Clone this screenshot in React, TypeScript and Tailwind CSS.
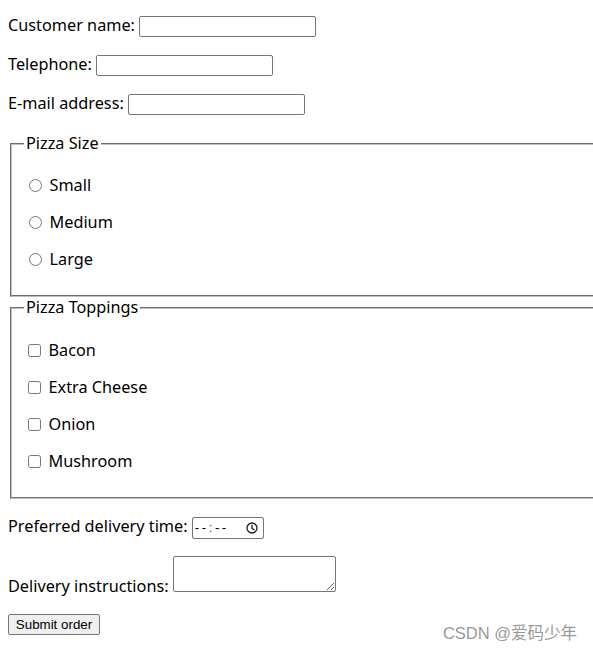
const inputCls =
  "align-baseline rounded-[2px] border border-[#767676] bg-white px-[2px] py-[1px] font-['Liberation_Sans',Arial,sans-serif] text-[13.333px] h-[21px] outline-none";

function ClockIcon() {
  return (
    <svg width="12" height="12" viewBox="0 0 12 12" className="ml-auto mr-[5px]">
      <circle cx="6" cy="6" r="5" fill="none" stroke="#1a1a1a" strokeWidth="1.3" />
      <path d="M6 3.2V6.2L8.1 7.7" fill="none" stroke="#1a1a1a" strokeWidth="1.3" strokeLinecap="round" strokeLinejoin="round" />
    </svg>
  );
}

export default function App() {
  const sizes = ["Small", "Medium", "Large"];
  const toppings = ["Bacon", "Extra Cheese", "Onion", "Mushroom"];
  const fieldsetCls =
    "ml-[2px] px-[12px] [border-width:2px_0_2px_2px] [border-style:groove] [border-color:#c0c0c0]";
  return (
    <div className="relative h-[652px] overflow-hidden bg-white pl-[8px] pt-[15px] font-['Noto_Sans',sans-serif] text-[16.25px] leading-[21px] text-black">
      <form onSubmit={(e) => e.preventDefault()}>
        <div className="h-[23px]">
          Customer name: <input type="text" className={inputCls + " w-[177px]"} />
        </div>
        <div className="mt-[16px] h-[23px]">
          Telephone: <input type="tel" className={inputCls + " w-[177px]"} />
        </div>
        <div className="mt-[16px] h-[23px]">
          E-mail address: <input type="email" className={inputCls + " w-[177px]"} />
        </div>

        <fieldset className={fieldsetCls + " mt-[17px] pt-[21px] pb-[25px]"}>
          <legend className="px-[2px] leading-[21px]">Pizza Size</legend>
          <div className="flex flex-col gap-[16px]">
            {sizes.map((s) => (
              <label key={s} className="flex h-[21px] items-center">
                <input type="radio" name="size" className="m-0 ml-[5px] mr-[7.5px] h-[13px] w-[13px]" />
                {s}
              </label>
            ))}
          </div>
        </fieldset>

        <fieldset className={fieldsetCls + " pt-[22px] pb-[25px]"}>
          <legend className="px-[2px] leading-[21px]">Pizza Toppings</legend>
          <div className="flex flex-col gap-[16px]">
            {toppings.map((t) => (
              <label key={t} className="flex h-[21px] items-center">
                <input type="checkbox" className="m-0 ml-[4px] mr-[7.5px] h-[13px] w-[13px]" />
                {t}
              </label>
            ))}
          </div>
        </fieldset>

        <div className="mt-[17px] h-[23px]">
          Preferred delivery time:{" "}
          <span className="inline-flex h-[22px] w-[72px] items-center rounded-[2px] border border-[#767676] bg-white align-baseline font-['Liberation_Sans',Arial,sans-serif] text-[13.333px] leading-[15px]">
            <span className="ml-[2px] tracking-[2.5px]">--</span>
            <span className="text-[#555]">:</span>
            <span className="ml-[2.5px] tracking-[2.5px]">--</span>
            <ClockIcon />
          </span>
        </div>

        <div className="mt-[17px] h-[40px]">
          Delivery instructions:{" "}
          <textarea className="h-[36px] w-[163px] rounded-[2px] border border-[#767676] bg-white align-baseline outline-none" />
        </div>

        <button
          type="submit"
          className="mt-[18px] block h-[21px] w-[92px] rounded-[2px] border border-[#767676] bg-[#efefef] font-['Liberation_Sans',Arial,sans-serif] text-[13.333px] leading-[15px] text-black"
        >
          Submit order
        </button>
      </form>

      <div className="absolute right-[16px] top-[624px] font-['Liberation_Sans','Noto_Sans_CJK_SC',sans-serif] text-[16.5px] leading-[18px] text-[#999]">
        CSDN @爱码少年
      </div>
    </div>
  );
}
